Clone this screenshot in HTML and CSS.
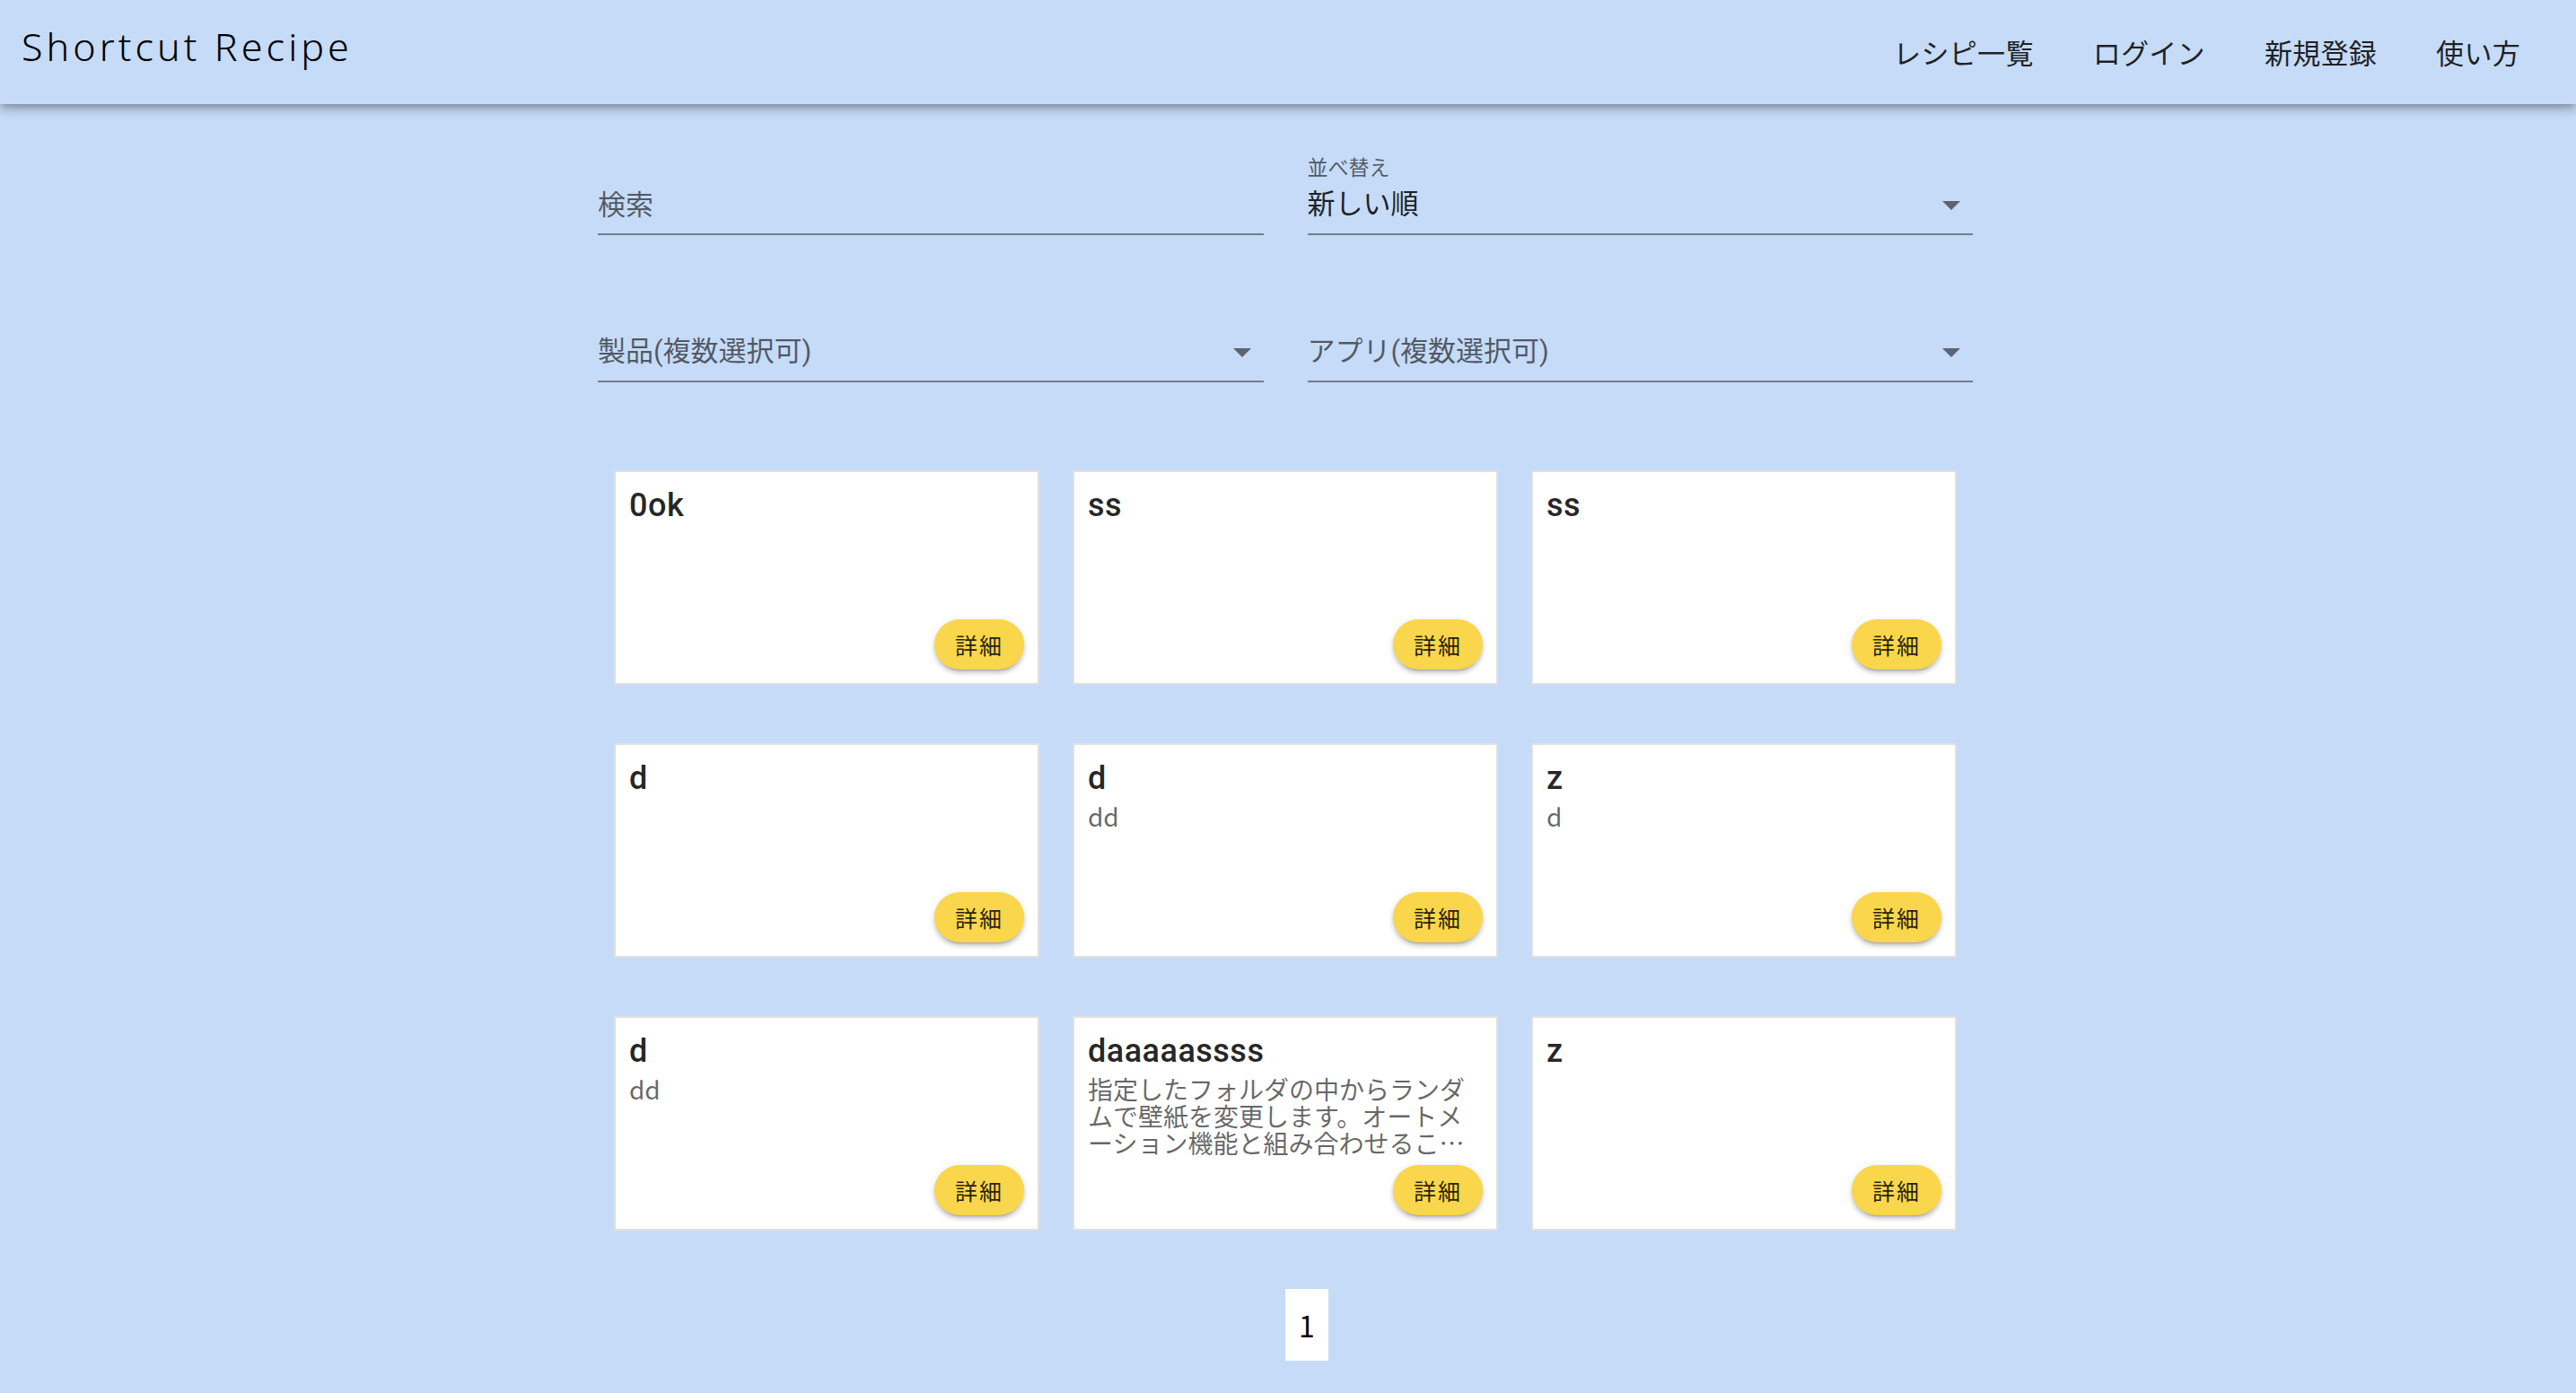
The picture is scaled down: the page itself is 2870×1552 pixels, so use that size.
FILE: index.html
```html
<!DOCTYPE html>
<html lang="ja">

<head>
    <meta charset="UTF-8">
    <meta name="viewport" content="width=device-width, initial-scale=1.0">
    <title>Shortcut Recipe</title>
    <link rel="stylesheet" href="styles.css">
</head>

<body>
    <header class="app-bar">
        <div class="app-title">Shortcut Recipe</div>
        <nav class="app-nav">
            <a href="#">レシピ一覧</a>
            <a href="#">ログイン</a>
            <a href="#">新規登録</a>
            <a href="#">使い方</a>
        </nav>
    </header>

    <main class="container">
        <!-- 検索・絞り込み -->
        <div class="filters">
            <div class="field">
                <input type="text" placeholder="検索">
            </div>
            <div class="field has-label">
                <label class="field-label">並べ替え</label>
                <div class="field-row">
                    <span class="field-value">新しい順</span>
                    <svg class="arrow" viewBox="0 0 24 24"><path d="M7 10l5 5 5-5z"/></svg>
                </div>
            </div>
            <div class="field">
                <div class="field-row">
                    <span class="field-placeholder">製品(複数選択可)</span>
                    <svg class="arrow" viewBox="0 0 24 24"><path d="M7 10l5 5 5-5z"/></svg>
                </div>
            </div>
            <div class="field">
                <div class="field-row">
                    <span class="field-placeholder">アプリ(複数選択可)</span>
                    <svg class="arrow" viewBox="0 0 24 24"><path d="M7 10l5 5 5-5z"/></svg>
                </div>
            </div>
        </div>

        <!-- レシピ一覧 -->
        <div class="recipes">
            <div class="recipe-card">
                <div class="recipe-title">0ok</div>
                <button class="btn-detail">詳細</button>
            </div>
            <div class="recipe-card">
                <div class="recipe-title">ss</div>
                <button class="btn-detail">詳細</button>
            </div>
            <div class="recipe-card">
                <div class="recipe-title">ss</div>
                <button class="btn-detail">詳細</button>
            </div>
            <div class="recipe-card">
                <div class="recipe-title">d</div>
                <button class="btn-detail">詳細</button>
            </div>
            <div class="recipe-card">
                <div class="recipe-title">d</div>
                <div class="recipe-desc">dd</div>
                <button class="btn-detail">詳細</button>
            </div>
            <div class="recipe-card">
                <div class="recipe-title">z</div>
                <div class="recipe-desc">d</div>
                <button class="btn-detail">詳細</button>
            </div>
            <div class="recipe-card">
                <div class="recipe-title">d</div>
                <div class="recipe-desc">dd</div>
                <button class="btn-detail">詳細</button>
            </div>
            <div class="recipe-card">
                <div class="recipe-title">daaaaassss</div>
                <div class="recipe-desc">指定したフォルダの中からランダムで壁紙を変更します。オートメーション機能と組み合わせることで、毎日自動的に壁紙を変えることができます。</div>
                <button class="btn-detail">詳細</button>
            </div>
            <div class="recipe-card">
                <div class="recipe-title">z</div>
                <button class="btn-detail">詳細</button>
            </div>
        </div>

        <div class="pagination">
            <button class="page active">1</button>
        </div>
    </main>
</body>

</html>
```

FILE: styles.css
```css
* {
    margin: 0;
    padding: 0;
    box-sizing: border-box;
}

html,
body {
    min-height: 100%;
}

body {
    font-family: Roboto, "Noto Sans CJK JP", sans-serif;
    background-color: #c6dbf7;
    color: rgba(0, 0, 0, .87);
}
/* ヘッダー */

.app-bar {
    position: relative;
    z-index: 1;
    height: 116px;
    display: flex;
    align-items: center;
    justify-content: space-between;
    padding: 0 29px 0 24px;
    background-color: #c6dbf7;
    box-shadow: 0 4px 7px -2px rgba(0, 0, 0, .2), 0 7px 9px 0 rgba(0, 0, 0, .14), 0 2px 18px 0 rgba(0, 0, 0, .12);
}

.app-title {
    font-family: "Noto Sans", "Noto Sans CJK JP", sans-serif;
    font-size: 43px;
    font-weight: 300;
    letter-spacing: 4.1px;
    color: #000;
    margin-bottom: 13px;
}

.app-nav {
    display: flex;
}

.app-nav a {
    font-family: "Noto Sans CJK JP", sans-serif;
    font-size: 31px;
    letter-spacing: .3px;
    line-height: 116px;
    padding: 0 33px;
    color: rgba(0, 0, 0, .87);
    text-decoration: none;
}
/* メイン */

.container {
    width: 1532px;
    margin: 0 auto;
    padding: 56px 0 40px;
    box-sizing: content-box;
    padding-right: 6px;
}

.filters {
    display: grid;
    grid-template-columns: 1fr 1fr;
    column-gap: 49px;
    row-gap: 74px;
}

.field {
    padding-top: 34px;
    padding-bottom: 10px;
    border-bottom: 2px solid #737f8f;
}

.field.has-label {
    padding-top: 0;
}

.field-label {
    display: block;
    height: 34px;
    line-height: 32px;
    font-size: 23px;
    color: rgba(0, 0, 0, .6);
}

.field-row {
    height: 44px;
    display: flex;
    align-items: center;
    justify-content: space-between;
}

.field input {
    display: block;
    width: 100%;
    height: 44px;
    border: none;
    outline: none;
    background: transparent;
    font-family: inherit;
    font-size: 31px;
    color: rgba(0, 0, 0, .87);
}

.field input::placeholder {
    color: rgba(0, 0, 0, .6);
}

.field-value,
.field-placeholder {
    font-size: 31px;
    line-height: 44px;
}

.field-placeholder {
    color: rgba(0, 0, 0, .6);
}

.arrow {
    width: 48px;
    height: 48px;
    fill: rgba(0, 0, 0, .54);
}
/* カード */

.recipes {
    display: grid;
    grid-template-columns: repeat(3, 1fr);
    column-gap: 37px;
    row-gap: 65px;
    margin: 98px 18px 0;
}

.recipe-card {
    height: 239px;
    display: flex;
    flex-direction: column;
    padding: 16px 15px 15px;
    background-color: #fff;
    border: 2px solid #e0e0e0;
}

.recipe-title {
    font-size: 36px;
    line-height: 42px;
    font-weight: 500;
    letter-spacing: .5px;
}

.recipe-desc {
    margin-top: 6px;
    font-family: "Noto Sans CJK JP", sans-serif;
    font-size: 28px;
    line-height: 30px;
    color: rgba(0, 0, 0, .6);
    line-break: normal;
    display: -webkit-box;
    -webkit-line-clamp: 3;
    -webkit-box-orient: vertical;
    overflow: hidden;
}

.btn-detail {
    margin-top: auto;
    align-self: flex-end;
    width: 100px;
    height: 56px;
    border: none;
    border-radius: 28px;
    background-color: #f9d64b;
    font-family: inherit;
    font-size: 25px;
    letter-spacing: 2px;
    color: rgba(0, 0, 0, .87);
    box-shadow: 0 5px 2px -4px rgba(0, 0, 0, .2), 0 4px 4px 0 rgba(0, 0, 0, .14), 0 2px 9px 0 rgba(0, 0, 0, .12);
}
/* ページネーション */

.pagination {
    display: flex;
    justify-content: center;
    padding-left: 48px;
    margin-top: 65px;
}

.page {
    width: 48px;
    height: 80px;
    border: none;
    background-color: #fff;
    font-family: "Noto Sans CJK JP", sans-serif;
    font-size: 32px;
    color: #000;
}
```
